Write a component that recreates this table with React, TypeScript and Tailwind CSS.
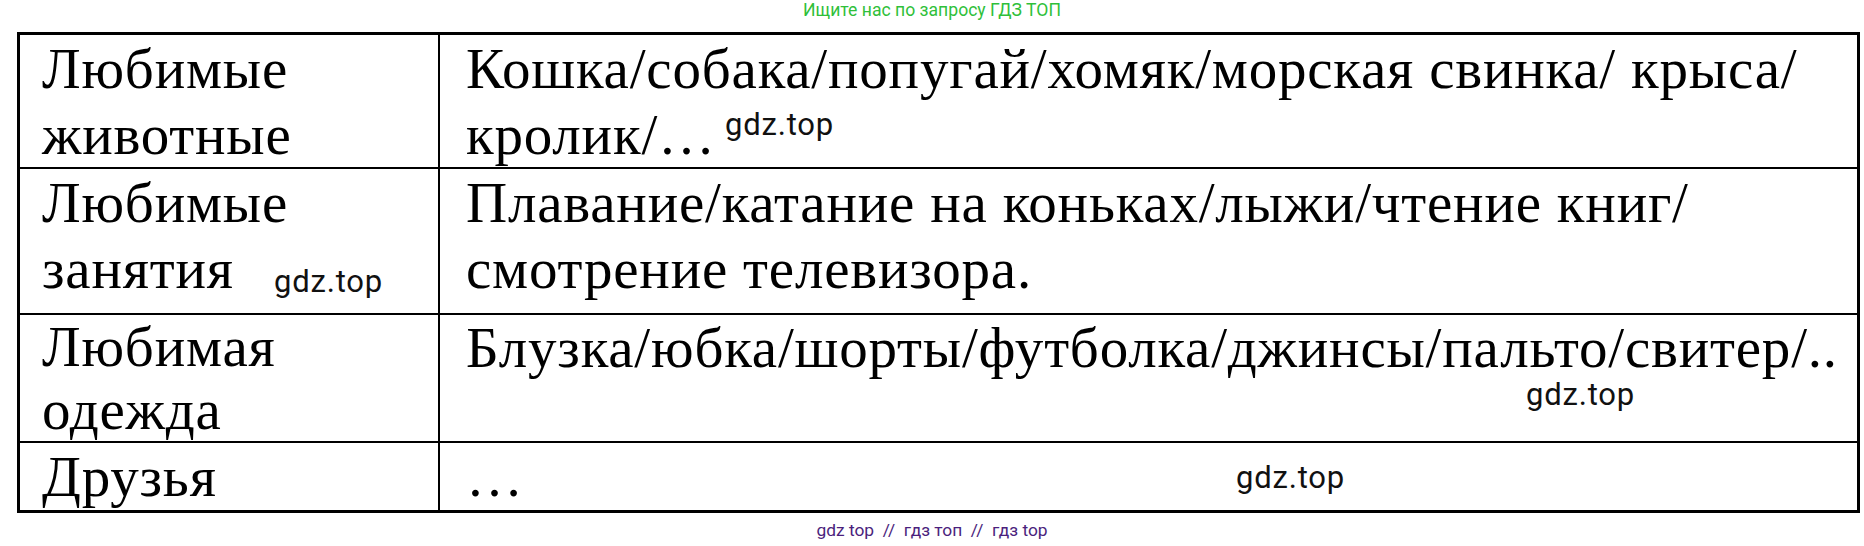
import React from "react";

const serif = { fontFamily: '"Liberation Serif", "Times New Roman", serif' };
const sans = { fontFamily: 'Roboto, "Liberation Sans", Arial, sans-serif' };

function Mark({ className }: { className: string }) {
  return (
    <span
      className={`absolute text-[31px] leading-none text-[#111] whitespace-nowrap ${className}`}
      style={sans}
    >
      gdz.top
    </span>
  );
}

export default function App() {
  return (
    <div className="w-[1864px] h-[546px] bg-white flex flex-col overflow-hidden">
      <div className="h-[32px] flex justify-center pt-[2px]">
        <span className="text-[17.6px] leading-none text-[#2fbf3a]" style={sans}>
          Ищите нас по запросу ГДЗ ТОП
        </span>
      </div>
      <div className="pl-[17px]">
        <div
          className="relative w-[1843px] h-[481px] border-[3px] border-black grid grid-cols-[420px_1fr] grid-rows-[134px_146px_128px_67px] text-black text-[57px] leading-[66px] tracking-[0.8px]"
          style={serif}
        >
          <div className="border-r-2 border-b-2 border-black pl-[22px] pt-[1px]">
            Любимые<br />животные
          </div>
          <div className="border-b-2 border-black pl-[26px] pt-[1px] whitespace-nowrap">
            Кошка/собака/попугай/хомяк/морская свинка/ крыса/<br />кролик/…
          </div>
          <div className="border-r-2 border-b-2 border-black pl-[22px] pt-[1px]">
            Любимые<br />занятия
          </div>
          <div className="border-b-2 border-black pl-[26px] pt-[1px] whitespace-nowrap">
            Плавание/катание на коньках/лыжи/чтение книг/<br />смотрение телевизора.
          </div>
          <div className="border-r-2 border-b-2 border-black pl-[22px] pt-0 leading-[63px]">
            Любимая<br />одежда
          </div>
          <div className="border-b-2 border-black pl-[26px] pt-[5px] leading-[56px] whitespace-nowrap">
            Блузка/юбка/шорты/футболка/джинсы/пальто/свитер/..
          </div>
          <div className="border-r-2 border-black pl-[22px] pt-[1px]">Друзья</div>
          <div className="pl-[26px] pt-[1px]">…</div>

          <Mark className="left-[705px] top-[74px]" />
          <Mark className="left-[254px] top-[231px]" />
          <Mark className="left-[1506px] top-[344px]" />
          <Mark className="left-[1216px] top-[427px]" />
        </div>
      </div>
      <div className="flex justify-center pt-[9px]">
        <span className="text-[17.4px] leading-none text-[#4b1f7d]" style={sans}>
          gdz top &nbsp;//&nbsp; гдз топ &nbsp;//&nbsp; гдз top
        </span>
      </div>
    </div>
  );
}
